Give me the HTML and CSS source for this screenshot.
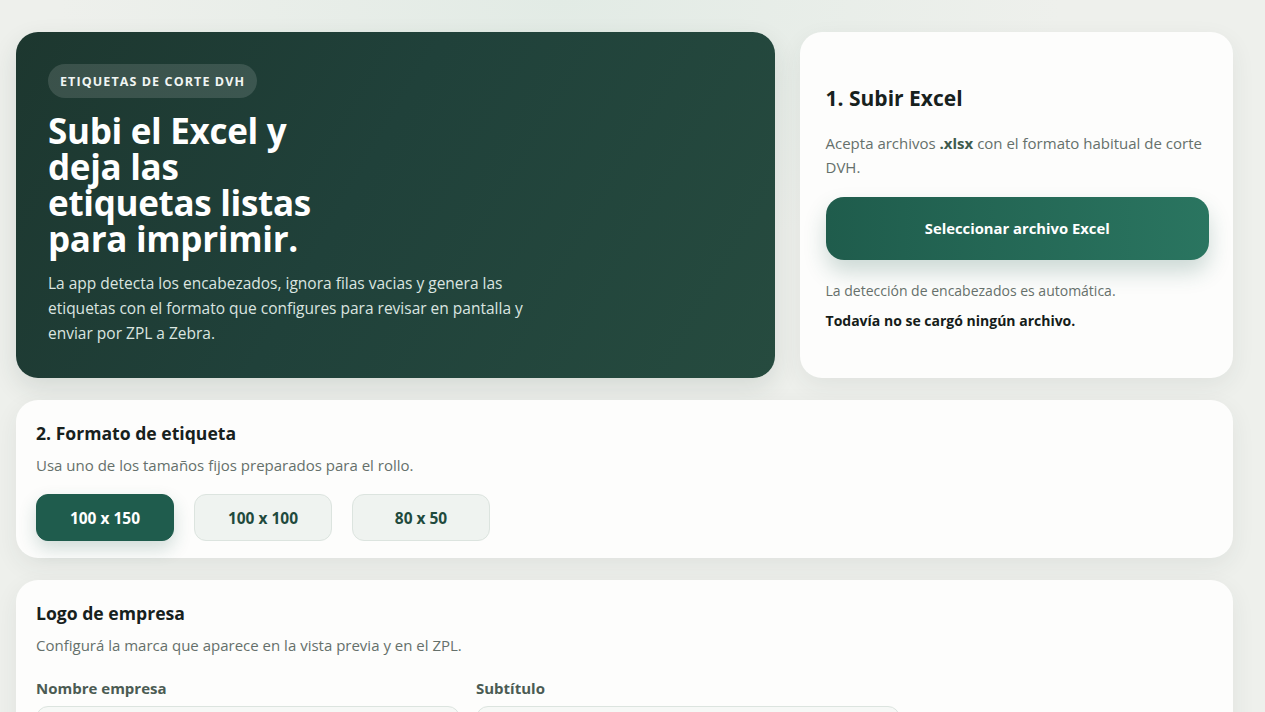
FILE: index.html
```html
<!DOCTYPE html>
<html lang="es">
<head>
  <meta charset="UTF-8">
  <meta name="viewport" content="width=device-width, initial-scale=1.0">
  <title>Etiquetas de corte DVH</title>
  <link rel="stylesheet" href="styles.css">
</head>
<body>
  <div class="container">
    <!-- Top row -->
    <div class="top-grid">
      <div class="hero">
        <span class="pill">Etiquetas de corte DVH</span>
        <h1>Subi el Excel y deja las etiquetas listas para imprimir.</h1>
        <p>La app detecta los encabezados, ignora filas vacias y genera las etiquetas con el formato que configures para revisar en pantalla y enviar por ZPL a Zebra.</p>
      </div>

      <div class="card upload-card">
        <h2>1. Subir Excel</h2>
        <p class="muted">Acepta archivos <strong>.xlsx</strong> con el formato habitual de corte DVH.</p>
        <button class="btn-upload">Seleccionar archivo Excel</button>
        <p class="hint">La detección de encabezados es automática.</p>
        <p class="status">Todavía no se cargó ningún archivo.</p>
      </div>
    </div>

    <!-- Format -->
    <div class="card section">
      <h3>2. Formato de etiqueta</h3>
      <p class="muted">Usa uno de los tamaños fijos preparados para el rollo.</p>
      <div class="size-list">
        <button class="size active">100 x 150</button>
        <button class="size">100 x 100</button>
        <button class="size">80 x 50</button>
      </div>
    </div>

    <!-- Logo -->
    <div class="card section">
      <h3>Logo de empresa</h3>
      <p class="muted">Configurá la marca que aparece en la vista previa y en el ZPL.</p>
      <div class="fields">
        <label class="field">
          <span>Nombre empresa</span>
          <input type="text" value="">
        </label>
        <label class="field">
          <span>Subtítulo</span>
          <input type="text" value="">
        </label>
        <label class="field">
          <span>Tamaño del nombre</span>
          <input type="text" value="">
        </label>
        <label class="field">
          <span>Tamaño del subtítulo</span>
          <input type="text" value="">
        </label>
      </div>
    </div>

    <!-- Preview -->
    <div class="card section">
      <h3>3. Vista previa</h3>
      <p class="muted">Cargá un archivo para ver las etiquetas generadas.</p>
      <div class="empty">Sin etiquetas para mostrar.</div>
    </div>

    <!-- Print -->
    <div class="card section">
      <h3>4. Imprimir</h3>
      <p class="muted">Enviá las etiquetas a la impresora Zebra por ZPL.</p>
      <div class="size-list">
        <button class="size active">Enviar a Zebra</button>
        <button class="size">Descargar ZPL</button>
      </div>
    </div>
  </div>
</body>
</html>
```

FILE: styles.css
```css
html {
  background: #eef0ec;
}

body {
  font-family: 'Open Sans', 'Noto Sans', sans-serif;
  background:
    radial-gradient(ellipse 500px 260px at 560px 0, #e2ebe5 0%, rgba(226, 235, 229, 0) 100%),
    #eef0ec;
  color: #17211d;
  margin: 0;
  padding: 0;
}

::-webkit-scrollbar {
  width: 15px;
  background: #2b2b2b;
}

::-webkit-scrollbar-thumb {
  background: #a6a6a6;
  border: 3px solid #2b2b2b;
  border-radius: 8px;
}

.container {
  padding: 32px 32px 60px 16px;
  display: flex;
  flex-direction: column;
  gap: 22px;
}

.top-grid {
  display: grid;
  grid-template-columns: minmax(0, 1.75fr) minmax(0, 1fr);
  gap: 25px;
}

.hero {
  background: linear-gradient(120deg, #1d372f 0%, #20413a 45%, #264b3f 100%);
  border-radius: 22px;
  padding: 32px 32px 32px;
  color: #fff;
  box-shadow: 0 10px 26px rgba(30, 60, 50, 0.12);
}

.pill {
  display: inline-block;
  background: rgba(255, 255, 255, 0.13);
  border-radius: 18px;
  padding: 9px 12px 8px;
  font-size: 12.5px;
  font-weight: 700;
  letter-spacing: 1.1px;
  text-transform: uppercase;
  color: #f1f5f3;
}

.hero h1 {
  margin: 15px 0 14px;
  font-size: 35px;
  line-height: 36px;
  font-weight: 700;
  letter-spacing: -0.3px;
  max-width: 290px;
}

.hero p {
  margin: 0;
  font-size: 15.5px;
  line-height: 25px;
  color: #dbe5e0;
  max-width: 480px;
}

.card {
  background: #fdfdfc;
  border-radius: 22px;
  box-shadow: 0 8px 24px rgba(40, 60, 50, 0.07);
}

.upload-card {
  padding: 26px 24px 22px 26px;
  display: flex;
  flex-direction: column;
  justify-content: center;
}

.upload-card h2 {
  margin: 0 0 19px;
  font-size: 21px;
  line-height: 28px;
}

.muted {
  margin: 0;
  color: #65706b;
  font-size: 15px;
  line-height: 24px;
}

.muted strong {
  color: #3d5a4c;
}

.btn-upload {
  margin-top: 18px;
  height: 63px;
  border: none;
  border-radius: 18px;
  background: linear-gradient(90deg, #1f5c4c, #2a7560);
  color: #fff;
  font-family: inherit;
  font-size: 14.8px;
  font-weight: 700;
  box-shadow: 0 12px 22px rgba(31, 92, 76, 0.22);
  cursor: pointer;
}

.hint {
  margin: 21px 0 0;
  font-size: 14px;
  line-height: 20px;
  color: #66706b;
}

.status {
  margin: 10px 0 0;
  font-size: 14px;
  line-height: 20px;
  font-weight: 700;
  color: #151c19;
}

.section {
  padding: 20px 20px 17px;
}

.section h3 {
  margin: 0 0 7px;
  font-size: 17.6px;
  line-height: 26px;
  color: #17211d;
}

.size-list {
  display: flex;
  gap: 20px;
  margin-top: 17px;
}

.size {
  width: 138px;
  height: 47px;
  border-radius: 12px;
  border: 1px solid #dce4df;
  background: #eff3f0;
  color: #1f4a3d;
  font-family: inherit;
  font-size: 15.5px;
  font-weight: 700;
  cursor: pointer;
}

.size.active {
  background: #1f5c4d;
  border-color: #1f5c4d;
  color: #fff;
  box-shadow: 0 8px 18px rgba(31, 92, 77, 0.2);
}

.fields {
  display: grid;
  grid-template-columns: repeat(2, 424px);
  gap: 18px 16px;
  margin-top: 21px;
}

.field span {
  display: block;
  font-size: 15px;
  font-weight: 700;
  color: #4b5b53;
  margin-bottom: 8px;
}

.field input {
  width: 100%;
  box-sizing: border-box;
  height: 44px;
  border: 1px solid #dce4df;
  border-radius: 12px;
  background: #f6f8f6;
  padding: 0 14px;
  font-family: inherit;
  font-size: 14px;
}

.empty {
  margin-top: 16px;
  height: 420px;
  border: 1px dashed #cfd9d3;
  border-radius: 16px;
  display: flex;
  align-items: center;
  justify-content: center;
  color: #7b8680;
  font-size: 14px;
}
```
